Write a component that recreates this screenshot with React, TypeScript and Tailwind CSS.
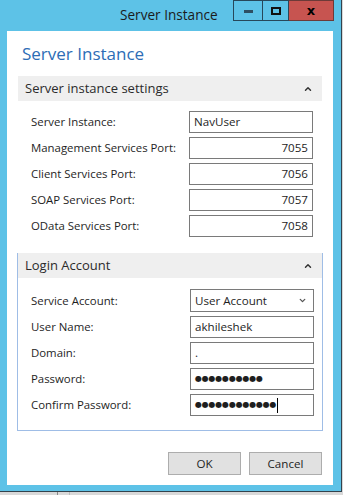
import { ChevronDown, ChevronUp } from 'lucide-react'

const font = { fontFamily: '"Open Sans", "Noto Sans", sans-serif' }

function Field({ label, value, align = 'left' }: { label: string; value: string; align?: 'left' | 'right' }) {
  return (
    <div className="flex items-center justify-between h-[22px]">
      <span className="text-[11.4px] text-[#1e1e1e]">{label}</span>
      <div
        className={`w-[124px] h-[22px] border border-[#7a7a7a] bg-white flex items-center px-[4px] text-[11.6px] text-[#1e1e1e] ${
          align === 'right' ? 'justify-end' : 'justify-start'
        }`}
      >
        {value}
      </div>
    </div>
  )
}

function PasswordField({ label, count, caret }: { label: string; count: number; caret?: boolean }) {
  return (
    <div className="flex items-center justify-between h-[22px]">
      <span className="text-[11.4px] text-[#1e1e1e]">{label}</span>
      <div className="w-[124px] h-[22px] border border-[#7a7a7a] bg-white flex items-center px-[4px]">
        <span
          className="text-[8px] leading-none tracking-[-0.2px] text-[#1e1e1e]"
          style={{ fontFamily: '"DejaVu Sans", sans-serif' }}
        >
          {'●'.repeat(count)}
        </span>
        {caret && <span className="ml-[1px] w-[1px] h-[15px] bg-black" />}
      </div>
    </div>
  )
}

function SectionHeader({ title }: { title: string }) {
  return (
    <div className="flex items-center justify-between h-[25px] bg-[#efefef] pl-[7px] pr-[9px]">
      <span className="text-[13px] text-[#2b2b2b]">{title}</span>
      <ChevronUp size={10} strokeWidth={3.5} className="text-[#333]" />
    </div>
  )
}

export default function App() {
  return (
    <div className="w-[343px] h-[495px] bg-[#d9d9d9] overflow-hidden flex flex-col" style={font}>
      <div className="w-[342px] h-[492px] bg-[#5dc2e7] border-r border-b border-[#33434d] flex flex-col">
        {/* Title bar */}
        <div className="relative h-[31px] shrink-0">
          <div className="absolute left-[120px] top-[5px] text-[13.6px] text-[#1b1b1b]">Server Instance</div>
          <div className="absolute left-[233px] top-0 flex h-[21px]">
            <div className="w-[30px] h-[21px] border border-[#27475a] flex items-center justify-center">
              <div className="w-[9px] h-[3px] bg-[#2d4f63] mt-[2px]" />
            </div>
            <div className="w-[26px] h-[21px] border-y border-r border-[#27475a] flex items-center justify-center">
              <div className="w-[10px] h-[8px] border-[2px] border-[#111]" />
            </div>
            <div className="w-[45px] h-[21px] bg-[#c75450] border-y border-r border-[#6d3a38] flex items-center justify-center">
              <span className="text-[13px] font-bold text-black leading-none" style={{ fontFamily: '"DejaVu Sans", sans-serif' }}>
                x
              </span>
            </div>
          </div>
        </div>

        {/* Client area */}
        <div className="ml-[7px] w-[326px] h-[454px] bg-white flex flex-col px-[10px]">
          <h1 className="pl-[5px] pt-[10px] h-[44px] text-[17px] text-[#2d6db6]">Server Instance</h1>

          <div className="border border-transparent">
            <SectionHeader title="Server instance settings" />
            <div className="pl-[13px] pr-[9px] pt-[10px] pb-[15px] flex flex-col gap-[4px]">
              <Field label="Server Instance:" value="NavUser" />
              <Field label="Management Services Port:" value="7055" align="right" />
              <Field label="Client Services Port:" value="7056" align="right" />
              <Field label="SOAP Services Port:" value="7057" align="right" />
              <Field label="OData Services Port:" value="7058" align="right" />
            </div>
          </div>

          <div className="border border-[#9fbde6]">
            <div className="-mt-[1px]">
              <SectionHeader title="Login Account" />
            </div>
            <div className="pl-[13px] pr-[8px] pt-[11px] pb-[14px] flex flex-col gap-[4px]">
              <div className="flex items-center justify-between h-[23px]">
                <span className="text-[11.4px] text-[#1e1e1e]">Service Account:</span>
                <div className="w-[124px] h-[23px] border border-[#7a7a7a] bg-white flex items-center justify-between pl-[4px] pr-[6px] text-[11.6px] text-[#1e1e1e]">
                  User Account
                  <ChevronDown size={9} strokeWidth={3.5} className="text-[#555]" />
                </div>
              </div>
              <Field label="User Name:" value="akhileshek" />
              <Field label="Domain:" value="." />
              <PasswordField label="Password:" count={10} />
              <PasswordField label="Confirm Password:" count={12} caret />
            </div>
          </div>

          <div className="mt-[21px] flex justify-end gap-[8px] pr-[1px]">
            <button className="w-[73px] h-[23px] bg-[#e1e1e1] border border-[#adadad] text-[11.6px] text-[#1e1e1e]">OK</button>
            <button className="w-[73px] h-[23px] bg-[#e1e1e1] border border-[#adadad] text-[11.6px] text-[#1e1e1e]">Cancel</button>
          </div>
        </div>
      </div>
      <div className="flex-1 flex">
        <div className="w-[58px] border-r border-[#888]" />
        <div className="w-[12px] border-r border-[#bbb]" />
      </div>
    </div>
  )
}
